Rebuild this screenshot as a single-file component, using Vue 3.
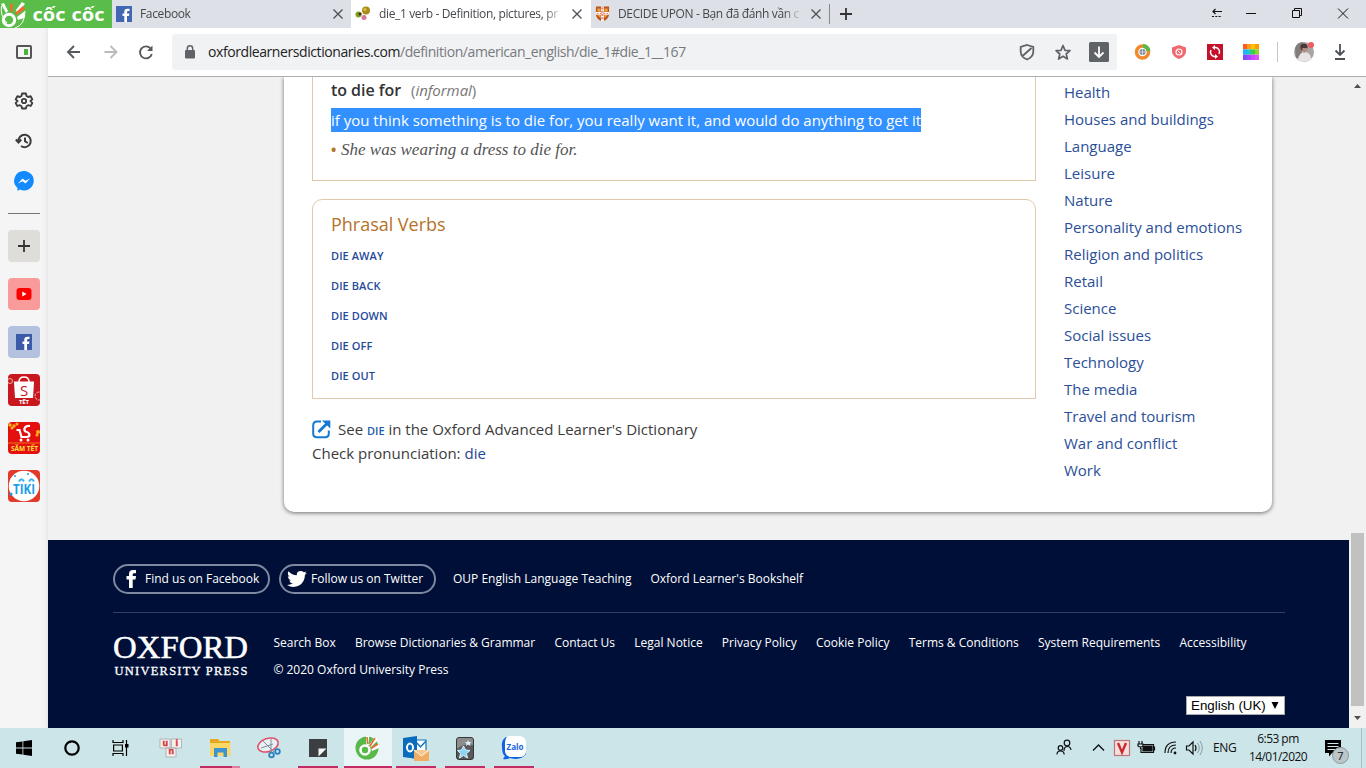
<script setup>
const topics = ['Health', 'Houses and buildings', 'Language', 'Leisure', 'Nature', 'Personality and emotions', 'Religion and politics', 'Retail', 'Science', 'Social issues', 'Technology', 'The media', 'Travel and tourism', 'War and conflict', 'Work']
const phrasals = ['DIE AWAY', 'DIE BACK', 'DIE DOWN', 'DIE OFF', 'DIE OUT']
const footerLinks = ['Search Box', 'Browse Dictionaries & Grammar', 'Contact Us', 'Legal Notice', 'Privacy Policy', 'Cookie Policy', 'Terms & Conditions', 'System Requirements', 'Accessibility']
const rainbow = ['#ff5a1f', '#ff9a1a', '#ffc400', '#ff9a00', '#19b5fe', '#22c8c0', '#35d04a', '#8ad62a', '#7a4dff', '#a348ff', '#cf48ff', '#e052ff']
</script>

<template>
  <div class="screen">
    <header class="tabs">
      <div class="brand">
        <svg width="112" height="28" viewBox="0 0 112 28">
          <rect width="112" height="28" fill="#5bbd49" />
          <g fill="none" stroke="#fff">
            <path d="M1.500 6Q0 16 7 23M15 28Q25 25 25 11" stroke-width="1" />
            <circle cx="9" cy="20" r="5.700" stroke-width="3" />
          </g>
          <path d="M1 4L4 3L8 11L6 13ZM17 17L25 11L24 18L18 20ZM16 10L22 2L25 4L17 13Z" fill="#fff" />
          <path d="M10 4L13 3.500L12.500 12L10.500 12ZM15 13L23 6L25 9L16.500 15Z" fill="#f26a2e" />
          <text x="32.500" y="20.500" class="brand-text" textLength="33" lengthAdjust="spacingAndGlyphs">cốc</text>
          <text x="71.500" y="20.500" class="brand-text" textLength="33" lengthAdjust="spacingAndGlyphs">cốc</text>
        </svg>
      </div>
      <div class="tab t1">
        <svg class="fav" width="16" height="16" viewBox="0 0 16 16"><rect width="16" height="16" fill="#4267b2" /><path d="M11 16V10H13L13.400 7.500H11V6.200Q11 5 12.300 5H13.500V2.800Q7.900 1.900 8.300 6V7.500H6.500V10H8.300V16Z" fill="#fff" /></svg>
        <span class="tt">Facebook</span>
        <svg class="x" width="10" height="10" viewBox="0 0 10 10"><path d="M.5 .5L9.500 9.500M9.500 .5L.5 9.500" /></svg>
      </div>
      <div class="tab t2">
        <svg class="fav" width="16" height="16" viewBox="0 0 16 16"><circle cx="11" cy="4.500" r="4" fill="#a98b16" /><circle cx="10" cy="3.500" r="1.700" fill="#d6b941" /><circle cx="3.500" cy="8.500" r="3" fill="#7da021" /><circle cx="5" cy="8" r="1.600" fill="#443016" /><circle cx="9" cy="11.500" r="2.500" fill="#d4789a" /></svg>
        <span class="tt">die_1 verb - Definition, pictures, pr</span>
        <svg class="x" width="10" height="10" viewBox="0 0 10 10"><path d="M.5 .5L9.500 9.500M9.500 .5L.5 9.500" /></svg>
      </div>
      <div class="tab t3">
        <svg class="fav" width="15" height="16" viewBox="0 0 16 16"><path d="M1 0H15V9Q14 14 8 16Q2 14 1 9Z" fill="#b9541d" /><path d="M2.500 2H6V5.500H2.500ZM10 2H13.500V5.500H10ZM2.500 9H6V12.500ZM10 9H13.500L10 12.500Z" fill="#f0a23b" /><path d="M6.500 0H9.500V16H6.500ZM1 5.800H15V8.800H1Z" fill="#fff" /><path d="M7.500 1V15M2 7.300H14M8.500 1V15" stroke="#d63a2c" stroke-width=".8" stroke-dasharray="2 1.500" /></svg>
        <span class="tt">DECIDE UPON - Bạn đã đánh vần c</span>
        <svg class="x" width="10" height="10" viewBox="0 0 10 10"><path d="M.5 .5L9.500 9.500M9.500 .5L.5 9.500" /></svg>
      </div>
      <svg class="plus" width="12" height="12" viewBox="0 0 12 12"><path d="M6 0V12M0 6H12" stroke="#333" stroke-width="1.800" /></svg>
      <div class="win">
        <svg width="160" height="28" viewBox="0 0 160 28" fill="none" stroke="#111">
          <path d="M13 11.500H22M15.500 9L13 11.500L15.500 14" stroke-width="1.200" /><path d="M12 16.500H22" stroke-dasharray="2 1.300" stroke-width="1.200" />
          <path d="M46 13.500H56" /><path d="M92.500 10.500H99.500V17.500H92.500ZM94.500 10.500V8.500H101.500V15.500H99.500" />
          <path d="M138 8.500L148 18.500M148 8.500L138 18.500" />
        </svg>
      </div>
    </header>

    <div class="middle">
      <aside class="side">
        <svg class="s1" width="16" height="14" viewBox="0 0 16 14"><rect x="1" y="1" width="14" height="12" rx="1" fill="none" stroke="#555" stroke-width="2" /><rect x="8" y="4" width="4" height="6" fill="#4caf3e" /></svg>
        <svg class="s2" width="20" height="20" viewBox="0 0 24 24" fill="none" stroke="#3c3c3c" stroke-width="2.200"><circle cx="12" cy="12" r="2.600" /><path d="M9.700 3H14.300L15 6L17 7.200L20 6.300L22 10L19.700 12L22 14.500L20 18L17 17L15 18.200L14.300 21H9.700L9 18.200L7 17L4 18L2 14.500L4.300 12L2 10L4 6.300L7 7.200L9 6Z" stroke-linejoin="round" /></svg>
        <svg class="s3" width="18" height="16" viewBox="0 0 18 16" fill="none" stroke="#3c3c3c" stroke-width="2"><path d="M3.500 9A6.200 6.200 0 1 1 6 13M.8 6.500L3.500 9.500L6.300 6.500M10 4.500V8.300L12.800 10" /></svg>
        <svg class="s4" width="20" height="20" viewBox="0 0 20 20"><path d="M10 0A9.700 9.700 0 1 1 6 18.500L3.500 20V17A9.700 9.700 0 0 1 10 0Z" fill="#148aff" /><path d="M4 12.500L8.500 7.500L11.500 9.800L16 7.500L11.500 12.500L8.500 10.200Z" fill="#fff" /></svg>
        <div class="rule"></div>
        <div class="tile grey"><svg width="12" height="12" viewBox="0 0 12 12"><path d="M6 0V12M0 6H12" stroke="#333" stroke-width="1.800" /></svg></div>
        <div class="tile pink"><svg width="16" height="12" viewBox="0 0 16 12"><rect x=".5" width="15" height="12" rx="3" fill="#f00" /><path d="M6.300 3.500L10.500 6L6.300 8.500Z" fill="#fff" /></svg></div>
        <div class="tile blue"><svg width="16" height="16" viewBox="0 0 16 16"><rect width="16" height="16" fill="#3b5ba9" /><path d="M11 16V10H13L13.400 7.500H11V6.200Q11 5 12.300 5H13.500V2.800Q7.900 1.900 8.300 6V7.500H6.500V10H8.300V16Z" fill="#fff" /></svg></div>
        <div class="tile"><svg width="32" height="32" viewBox="0 0 32 32"><rect width="32" height="32" fill="#c8171f" /><path d="M11 8Q11 3 16 3Q21 3 21 8" stroke="#fff" stroke-width="1.500" fill="none" /><path d="M6 7.500H26L25 24H7Z" fill="#fff" /><text x="16" y="21.500" text-anchor="middle" class="sans" font-size="15" fill="#c8171f">S</text><text x="16" y="30" text-anchor="middle" class="sans bold" font-size="6" fill="#fff" textLength="10">TẾT</text><circle cx="2" cy="7" r="2.500" fill="none" stroke="#f0b5a0" /><circle cx="31" cy="22" r="4" fill="none" stroke="#f0b5a0" stroke-dasharray="3 1" /></svg></div>
        <div class="tile"><svg width="32" height="32" viewBox="0 0 32 32"><rect width="32" height="32" fill="#e3100f" /><path d="M8.500 8H11.500L13.500 15H19Q22.500 14.500 21 11.500Q20 10 17.500 9.500Q15.500 8 17 5.500Q18.500 3.500 22 4" stroke="#fff" stroke-width="2.200" fill="none" /><circle cx="13" cy="18" r="1.500" fill="#fff" /><circle cx="20" cy="18" r="1.500" fill="#fff" /><path d="M0 21H32" stroke="#ffb21a" stroke-width=".6" /><g fill="#ffb21a"><circle cx="2" cy="3" r="1.700" /><circle cx="6" cy="4" r="1.700" /><circle cx="9" cy="2" r="1.500" /><circle cx="4" cy="6" r="1.500" /><circle cx="30" cy="10" r="2" /><circle cx="29" cy="13" r="1.500" /></g><text x="3" y="28.500" class="sans bold" font-size="7" fill="#ffe13a" textLength="27" lengthAdjust="spacingAndGlyphs">SĂM TẾT</text></svg></div>
        <div class="tile"><svg width="32" height="32" viewBox="0 0 32 32"><rect width="32" height="32" fill="#e23a2a" /><circle cx="16" cy="16" r="15.300" fill="#fff" /><text x="5" y="24" class="sans bold" font-size="14" fill="#189eea" textLength="22" lengthAdjust="spacingAndGlyphs">TIKI</text><path d="M11 11.500Q13.500 7 16 11.500M21 11.500Q23.500 7 26 11.500" stroke="#3bb4ee" stroke-width="2" fill="none" /><circle cx="20" cy="4" r="1" fill="#189eea" /><circle cx="7" cy="6" r="1" fill="#189eea" /><circle cx="3" cy="24" r="1.600" fill="#189eea" /></svg></div>
      </aside>

      <div class="main">
        <div class="toolbar">
          <svg class="nav" width="124" height="48" viewBox="0 0 124 48" fill="none" stroke="#555a5e" stroke-width="1.900">
            <path d="M32 24H20.500M26 18L20 24L26 30" />
            <path d="M56.500 24H68M62.500 18L68.500 24L62.500 30" stroke="#b9bbbe" />
            <path d="M102.600 20.500A6 6 0 1 0 103.800 26" /><path d="M104.500 17.500V23H99Z" fill="#555a5e" stroke="none" />
          </svg>
          <div class="omni">
            <svg class="lock" width="12" height="14" viewBox="0 0 12 14"><rect x="1" y="5" width="10" height="8.500" rx="1" fill="#5f6368" /><path d="M3.300 6V3.500A2.700 2.700 0 0 1 8.700 3.500V6" stroke="#5f6368" stroke-width="1.500" fill="none" /></svg>
            <div class="url"><span class="host">oxfordlearnersdictionaries.com</span><span>/definition/american_english/die_1#die_1__167</span></div>
            <svg class="omni-icons" width="110" height="36" viewBox="0 0 110 36" fill="none" stroke="#5f6368" stroke-width="1.800">
              <path d="M20 11L26.300 13V18Q26 23 20 25.500Q14 23 13.700 18V13Z M15.500 22L24.500 14" />
              <path d="M56 11.500L58 16.300L63 16.700L59.200 20L60.400 25L56 22.300L51.600 25L52.800 20L49 16.700L54 16.300Z" stroke-linejoin="round" stroke-width="1.700" />
              <rect x="82" y="8" width="20" height="20" rx="1.500" fill="#5f6368" stroke="none" /><path d="M92 12.500V23M87.500 18.500L92 23L96.500 18.500" stroke="#fff" />
            </svg>
          </div>
          <svg class="ext" width="232" height="48" viewBox="0 0 232 48">
            <circle cx="25.500" cy="24" r="6" fill="#fff" stroke="#f08a2c" stroke-width="3.500" /><path d="M26 18A6 6 0 0 1 31.500 23" stroke="#5bb947" stroke-width="4" fill="none" /><circle cx="25.500" cy="24" r="3" fill="#758592" /><path d="M22.500 24H28.500M25.500 21V27" stroke="#dce4e9" stroke-width=".8" />
            <path d="M62 17L69 19.500V24Q68.500 28.500 62 31Q55.500 28.500 55 24V19.500Z" fill="#ee6a6f" /><circle cx="62" cy="24" r="3" fill="none" stroke="#fff" stroke-width="1.100" /><path d="M60.500 22.500L63.500 25.500" stroke="#fff" />
            <rect x="90" y="16" width="16" height="16" fill="#c4122a" /><path d="M97 19.500H99A4.500 4.500 0 0 1 102 26M99 28.500H97A4.500 4.500 0 0 1 94 22" fill="none" stroke="#fff" stroke-width="1.500" /><path d="M98 17V22L95 19.500ZM98 31V26L101 28.500Z" fill="#fff" />
            <rect v-for="(c, i) in rainbow" :key="i" :x="126 + (i % 4) * 4" :y="16 + Math.floor(i / 4) * 5.330" width="4" height="5.330" :fill="c" />
            <path d="M160.500 14V34" stroke="#c4c7cb" />
            <circle cx="187" cy="24" r="10" fill="#a9a5a4" /><path d="M178 20Q180 14 186 14L184 30L179 30Z" fill="#827c7b" /><circle cx="187" cy="19" r="3.600" fill="#4a3935" /><path d="M181 32Q182 24 188 24Q194 25 194 31Q187 36 181 32Z" fill="#e8e4e5" /><path d="M185 20H190V23L187 25Z" fill="#b98a79" /><circle cx="194" cy="17" r="3" fill="#f15b62" />
            <path d="M223 16V27M218.500 22.500L223 27L227.500 22.500M218 31H228" fill="none" stroke="#4b4f53" stroke-width="1.800" />
          </svg>
        </div>

        <div class="page">
          <div class="view">
            <div class="upper">
              <div class="card">
                <div class="entry">
                  <section class="idiom">
                    <div class="head"><span class="phrase">to die for</span><span class="label">(<i>informal</i>)</span></div>
                    <div class="def"><mark>if you think something is to die for, you really want it, and would do anything to get it</mark></div>
                    <div class="example"><b>•</b><i>She was wearing a dress to die for.</i></div>
                  </section>
                  <section class="pv">
                    <h2>Phrasal Verbs</h2>
                    <a v-for="p in phrasals" :key="p">{{ p }}</a>
                  </section>
                  <div class="see">
                    <svg width="19" height="19" viewBox="0 0 19 19" fill="none" stroke="#1479cf" stroke-width="2"><path d="M9 1.500H5Q1.200 1.500 1.200 5.500V13.500Q1.200 17.300 5 17.300H13Q16.800 17.300 16.800 13.500V10.500" /><path d="M6.500 12L15 3.500" stroke-width="2.800" /><path d="M10 .5H18.300V8.500Z" fill="#1479cf" stroke="none" /></svg>
                    <span>See <a class="sc">DIE</a> in the Oxford Advanced Learner's Dictionary</span>
                  </div>
                  <div class="check">Check pronunciation: <a>die</a></div>
                </div>
                <nav class="topics"><a v-for="t in topics" :key="t">{{ t }}</a></nav>
              </div>
            </div>
            <footer class="footer">
              <div class="social">
                <a class="pill fb"><svg width="11" height="18" viewBox="0 0 11 18"><path d="M3 18V9.500H.5V6H3V4Q3 0 7 0H10V3.200H8Q6.700 3.200 6.700 4.500V6H10L9.500 9.500H6.700V18Z" fill="#fff" /></svg><span>Find us on Facebook</span></a>
                <a class="pill tw"><svg width="20" height="16" viewBox="0 0 20 16"><path d="M20 1.900L17.900 4Q18 11 12 14.500Q6 17.500 0 14Q3.500 14 6 12.200Q3 12 2.200 9.400H4Q1 8.200 .8 5.200L2.600 5.700Q-.2 3.300 1.500 .3Q5 4.200 9.800 4.300Q9.500 0 13.700 0Q15.500 0 16.800 1.300L19.300 .4L17.800 2.500Z" fill="#fff" /></svg><span>Follow us on Twitter</span></a>
                <a class="elt">OUP English Language Teaching</a>
                <a class="shop">Oxford Learner's Bookshelf</a>
              </div>
              <div class="foot-main">
                <svg class="oup" width="136" height="42" viewBox="0 0 136 42" fill="#fff"><text x="0" y="22.500" font-size="31" textLength="135" lengthAdjust="spacingAndGlyphs" class="serif">OXFORD</text><text x="1.500" y="39.500" font-size="12.500" textLength="133" class="serif uni">UNIVERSITY PRESS</text></svg>
                <div>
                  <div class="flinks"><a v-for="l in footerLinks" :key="l">{{ l }}</a></div>
                  <div class="copy">© 2020 Oxford University Press</div>
                </div>
              </div>
              <div class="lang"><div class="select"><span>English (UK)</span><svg width="8" height="7" viewBox="0 0 8 7"><path d="M.5 0H7.500L4 7Z" fill="#000" /></svg></div></div>
            </footer>
          </div>
          <div class="scroll">
            <svg width="7" height="4" viewBox="0 0 7 4"><path d="M0 4L3.500 0L7 4Z" fill="#505050" /></svg>
            <div class="thumb"></div>
            <svg width="7" height="4" viewBox="0 0 7 4"><path d="M0 0L3.500 4L7 0Z" fill="#505050" /></svg>
          </div>
        </div>
      </div>
    </div>

    <div class="taskbar">
      <div class="sys"><svg width="16" height="16" viewBox="0 0 16 16"><path d="M0 2.300L6.500 1.400V7.500H0ZM7.300 1.300L16 0V7.500H7.300ZM0 8.400H6.500V14.600L0 13.700ZM7.300 8.400H16V16L7.300 14.700Z" /></svg></div>
      <div class="sys"><svg width="16" height="16" viewBox="0 0 16 16"><circle cx="8" cy="8" r="6.700" fill="none" stroke="#000" stroke-width="2.200" /></svg></div>
      <div class="sys"><svg width="17" height="16" viewBox="0 0 17 16" fill="none" stroke="#000" stroke-width="1.200"><path d="M1 0V2.500H11V0M1 16V13.500H11V16M1.600 5H10.400V11H1.600ZM14.500 0V16" /><path d="M13 4H16.500V7.500H13Z" fill="#000" stroke="none" /></svg></div>
      <div class="app first"><svg width="24" height="20" viewBox="0 0 24 20"><g fill="#f4f0f0" stroke="#aaa6a8" stroke-width=".8"><path d="M1 1H11V10H1ZM12.500 1H22.500V10H12.500ZM7 10H17V19H7Z" /></g><g class="sans bold" font-size="8.500" fill="#d83535" stroke="#d83535" stroke-width=".4"><text x="3.500" y="7.500">u</text><text x="16.500" y="7.500">i</text><text x="9.500" y="16">n</text></g></svg></div>
      <div class="app open two"><svg width="22" height="20" viewBox="0 0 22 20"><path d="M1 1H9L10.500 3H21V18H1Z" fill="#e7a820" /><path d="M1 5H21.500V18H1Z" fill="#fcd667" /><path d="M5 10H18V19H14.500V14.500H8.500V19H5Z" fill="#3e94cf" /></svg></div>
      <div class="app"><svg width="26" height="24" viewBox="0 0 26 24"><ellipse cx="12" cy="9" rx="10.500" ry="6.500" fill="#e7f0f3" stroke="#e0536a" stroke-width="1.600" transform="rotate(-18 12 9)" /><path d="M7 5L18 16M15 3L15 16M5 12L17 8" stroke="#818e98" /><g fill="none" stroke="#2c82c0" stroke-width="1.800"><circle cx="15.500" cy="19" r="2.300" /><circle cx="21.500" cy="15.500" r="2.300" /></g></svg></div>
      <div class="app open"><svg width="18" height="18" viewBox="0 0 18 18"><path d="M0 0H18V18H0Z" fill="#3c3f41" /><path d="M9.500 17.500V9.500H17.500Z" fill="#f3f7f8" /></svg></div>
      <div class="app open active"><svg width="24" height="24" viewBox="0 0 24 24"><circle cx="12" cy="12" r="11.500" fill="#58b849" /><circle cx="10" cy="14" r="4.500" fill="none" stroke="#fff" stroke-width="2.600" /><path d="M11 0L14 0L14 9L11.500 9ZM14 9L20 1L23 4L16 11ZM16 12L24 7L24 12L17 15Z" fill="#fff" /><path d="M12 1L13 8M20 2L15 10M23 8L16 12.500" stroke="#ec6a34" stroke-width="1.600" /></svg></div>
      <div class="app open"><svg width="26" height="25" viewBox="0 0 26 25"><path d="M12 4H23V16H12Z" fill="#fff" stroke="#1474c4" stroke-width="1.200" /><path d="M13 6L17.500 11L23 5" stroke="#1474c4" stroke-width="1.500" fill="none" /><path d="M0 2L14 0V23L0 21Z" fill="#0a6cbc" /><ellipse cx="7" cy="11.500" rx="3" ry="3.900" fill="none" stroke="#fff" stroke-width="2" /><path d="M11 14H26V25H11Z" fill="#f1ae62" /><path d="M11 14L18.500 20L26 14" fill="#f8c890" stroke="#fff" stroke-width=".9" /></svg></div>
      <div class="app open"><svg width="18" height="23" viewBox="0 0 18 23"><rect x=".5" y=".5" width="17" height="22" rx="2.500" fill="#59595b" stroke="#38383a" /><path d="M1 12Q8 6 17 8V3Q17 1 15 1H3Q1 1 1 3Z" fill="#8c8c8c" /><path d="M7.500 9L9.500 13L14 13.500L10.500 16.500L11.500 21L7.500 18.500L3.500 21L4.500 16.500L1.500 13.500L5.500 13Z" fill="#8fd3f3" stroke="#d5f2ff" /><path d="M12 3L13 5H15.500L14 6.500L14.500 9L12 7.500L10 9L10.500 6.500L9 5H11.300Z" fill="#d8f0fb" /></svg></div>
      <div class="app open"><svg width="26" height="26" viewBox="0 0 26 26"><path d="M5 2Q0 5 1 12Q1 19 4 21L2 24Q5 25 9 23Q20 26 25 19L20 4Z" fill="#0e62e3" /><path d="M8 1H19Q25 2 25 8V17Q24 22 19 22H9Q5 21 4 17V8Q4 2 8 1Z" fill="#fff" /><text x="5.500" y="14.500" class="sans bold" font-size="8" fill="#1664dd" textLength="17" lengthAdjust="spacingAndGlyphs">Zalo</text></svg></div>
      <svg class="tray" width="160" height="40" viewBox="0 0 160 40" fill="none" stroke="#111" stroke-width="1.200">
        <circle cx="18" cy="15" r="2.800" /><path d="M15 23Q15 18.500 18.500 18.500Q21.500 18.500 22 22" /><circle cx="11.500" cy="20" r="2.300" /><path d="M8 26.500Q8 23 11.500 23Q15 23 15.200 26.500" />
        <path d="M44 22.500L49.500 17L55 22.500" stroke-width="1.400" />
        <rect x="65.500" y="12.500" width="15" height="15" fill="#f6dedd" stroke="#be7676" /><path d="M69 15L73 24.500L77 15" stroke="#c92c30" stroke-width="2.400" />
        <path d="M94 16.500H104.500V24.500H92V20M105.500 18.500V22.500" /><path d="M95 18H103V23H94V20Z" fill="#111" /><path d="M90 13V16M93 13V16M89 16H94V18Q91.500 20 89 18ZM91.500 19V21" />
        <path d="M116 26Q116 15 127 15M119 26Q119 18 127 18M122 26Q122 21 127 21" transform="translate(0 -1)" /><circle cx="126" cy="25" r="1.400" fill="#111" stroke="none" />
        <path d="M137.500 18H140L144 14V26L140 22H137.500Z" /><path d="M146 17Q148 20 146 23" /><path d="M148.500 15Q152 20 148.500 25M151 13Q155.500 20 151 27" stroke="#7f9295" stroke-width=".9" />
      </svg>
      <span class="eng">ENG</span>
      <div class="clock"><div class="time">6:53 pm</div><div class="date">14/01/2020</div></div>
      <svg class="notif" width="28" height="30" viewBox="0 0 28 30"><path d="M1 3H17V16H8L5 19.500V16H1Z" fill="#000" /><path d="M3.500 6.500H14.500M3.500 9.500H14.500M3.500 12.500H11" stroke="#cfe7ea" /><circle cx="16.500" cy="18.500" r="8" fill="#bcc5c8" stroke="#8e999c" /><text x="16.500" y="22.500" text-anchor="middle" class="sans" font-size="11" fill="#111">7</text></svg>
      <div class="edge"></div>
    </div>
  </div>
</template>

<style>
body { overflow: hidden; }
</style>
<style scoped>
* { box-sizing: border-box; }
svg { display: block; flex: none; }
.screen { width: 1366px; height: 768px; display: flex; flex-direction: column; font-family: "Open Sans", "Noto Sans", sans-serif; overflow: hidden; background: #fff; white-space: nowrap; }
.sans { font-family: "Open Sans", sans-serif; }
.bold { font-weight: 700; }
.serif { font-family: "Liberation Serif", serif; stroke: #fff; stroke-width: .5; }
.uni { stroke-width: .3; }
.brand-text { font: 700 17px "Open Sans", sans-serif; fill: #fff; }
.tabs { height: 28px; display: flex; background: #dde0e6; flex: none; align-items: stretch; }
.brand { width: 112px; }
.tab { display: flex; align-items: center; padding-left: 4px; height: 28px; }
.t1 { width: 239px; }
.t2 { width: 240px; background: #fff; }
.t3 { width: 239px; position: relative; }
.t3::after { content: ""; position: absolute; right: 0; top: 4px; height: 20px; width: 1px; background: #85888d; }
.tt { font-size: 12px; color: #45484d; margin-left: 8px; width: 186px; margin-right: 7px; letter-spacing: -.36px; line-height: 20px; -webkit-mask-image: linear-gradient(90deg, #000 166px, transparent 184px); mask-image: linear-gradient(90deg, #000 166px, transparent 184px); }
.x { stroke: #4c4f54; stroke-width: 1.3; fill: none; }
.plus { margin: 8px 0 0 10px; }
.win { margin-left: auto; width: 160px; margin-right: 6px; }
.middle { display: flex; height: 700px; flex: none; }
.side { width: 48px; background: #f5f5f5; display: flex; flex-direction: column; align-items: center; box-shadow: inset -5px 0 5px -4px #e2e2e2; }
.s1 { margin-top: 17px; }
.s2 { margin-top: 32px; }
.s3 { margin-top: 22px; }
.s4 { margin-top: 22px; }
.rule { width: 32px; height: 1px; background: #777; margin: 22px 0 16px; flex: none; }
.tile { width: 32px; height: 32px; border-radius: 4px; margin-bottom: 16px; flex: none; overflow: hidden; display: flex; align-items: center; justify-content: center; }
.grey { background: #dfddd9; }
.pink { background: #f99b9b; }
.blue { background: #b4c2df; }
.main { width: 1318px; }
.toolbar { height: 48px; display: flex; background: #fff; align-items: center; }
.omni { width: 945px; height: 36px; border-radius: 3px; background: #f1f2f4; display: flex; align-items: center; }
.lock { margin-left: 12px; }
.url { margin-left: 12px; margin-top: -1px; font-size: 14px; color: #77797d; letter-spacing: -.42px; }
.host { color: #222; }
.omni-icons { margin-left: auto; }
.page { height: 652px; border-top: 1px solid #adaeaf; display: flex; background: #f1f1f1; }
.view { width: 1301px; }
.upper { height: 463px; padding-left: 236px; }
.card { width: 988px; height: 435px; background: #fff; border-radius: 0 0 10px 10px; box-shadow: 0 1px 4px rgba(0, 0, 0, .55); display: flex; clip-path: inset(0 -8px -8px -8px); }
.entry { width: 724px; margin-left: 28px; color: #3c3c3c; font-size: 15px; }
.idiom { height: 104px; border: 1px solid #e0c9aa; border-top: 0; padding-left: 18px; }
.head { height: 31px; line-height: 26px; }
.phrase { font-size: 16px; font-weight: 600; letter-spacing: -.05px; color: #333; }
.label { margin-left: 10px; color: #777; font-size: 15px; letter-spacing: -.05px; }
.def { height: 24px; line-height: 24px; }
mark { display: inline-block; height: 24px; background: #3390ff; color: #fff; }
.example { margin-top: 5px; line-height: 24px; display: flex; color: #555; }
.example b { color: #b5762a; width: 10px; font-size: 14px; line-height: 25px; }
.example i { font: italic 17px/25px "Liberation Serif", serif; }
.pv { margin-top: 18px; height: 200px; border: 1px solid #e0c9aa; border-radius: 10px 10px 0 0; padding-left: 18px; display: flex; flex-direction: column; }
h2 { margin: 11px 0 4px; font-weight: 400; font-size: 18px; line-height: 26px; color: #b5722a; letter-spacing: -.02px; }
.pv a { font-size: 11px; font-weight: 600; line-height: 30px; height: 30px; color: #1f4b9a; letter-spacing: .08px; }
.see { margin-top: 18px; height: 24px; display: flex; align-items: center; }
.see svg { margin-right: 7px; }
.see .sc { font-size: 11px; font-weight: 600; color: #1b5bb0; }
.check { line-height: 24px; }
.check a { color: #1f4690; }
.topics { margin-left: 28px; padding-top: 2px; display: flex; flex-direction: column; }
.topics a { font-size: 15px; line-height: 27px; color: #2a4f98; }
.footer { height: 188px; background: #000f38; padding: 24px 64px 0 65px; color: #fff; font-size: 12px; }
.social { height: 49px; display: flex; align-items: flex-start; line-height: 30px; border-bottom: 1px solid #333e63; }
.pill { height: 30px; border: 2px solid #7f88a1; border-radius: 15px; display: flex; align-items: center; line-height: 26px; }
.fb { width: 157px; padding-left: 11px; margin-right: 9px; }
.fb svg { margin-right: 8px; }
.tw { width: 157px; padding-left: 6px; margin-right: 17px; }
.tw svg { margin-right: 4px; }
.elt { margin-right: 19px; }
.foot-main { display: flex; padding-top: 22px; height: 83px; }
.oup { margin: 0 24px 0 0; overflow: visible; }
.flinks { display: flex; gap: 19.2px; line-height: 16px; }
.flinks, .copy { padding-left: .4px; }
.copy { margin-top: 11px; line-height: 16px; }
.lang { display: flex; justify-content: flex-end; }
.select { width: 99px; height: 19px; background: #fff; border: 1px solid #a9a9a9; color: #000; font: 13.33px/17px "Liberation Sans", sans-serif; display: flex; align-items: center; padding-left: 4px; gap: 5px; }
.scroll { width: 17px; display: flex; flex-direction: column; align-items: center; padding-top: 7px; }
.thumb { width: 13px; height: 173px; background: #c1c1c1; margin: 445px 0 10px; }
.taskbar { height: 40px; background: #cbe5e9; display: flex; flex: none; }
.sys { width: 48px; display: flex; align-items: center; justify-content: center; }
.app { width: 49px; height: 40px; position: relative; display: flex; align-items: center; justify-content: center; }
.first { margin-left: 2.5px; }
.open::after { content: ""; position: absolute; left: 4.5px; right: 4.5px; bottom: 0; height: 2px; background: #c22c62; }
.two::after { background: linear-gradient(90deg, #c22c62 32px, #dc7fa2 32px); }
.active { background: linear-gradient(90deg, transparent 1px, #e9f5f6 1px); }
.active::after { left: 1px; right: 0; }
.tray { margin-left: auto; }
.eng { width: 24px; margin-left: 4px; font-size: 12px; line-height: 40px; letter-spacing: -.4px; color: #111; }
.clock { width: 70px; margin-left: 6px; text-align: center; font-size: 12px; line-height: 18px; padding-top: 2px; color: #111; letter-spacing: -.55px; }
.notif { margin: 9px 0 0 11px; }
.edge { width: 1px; height: 40px; background: #a9bfc3; margin: 0 4px 0 9px; }
</style>
